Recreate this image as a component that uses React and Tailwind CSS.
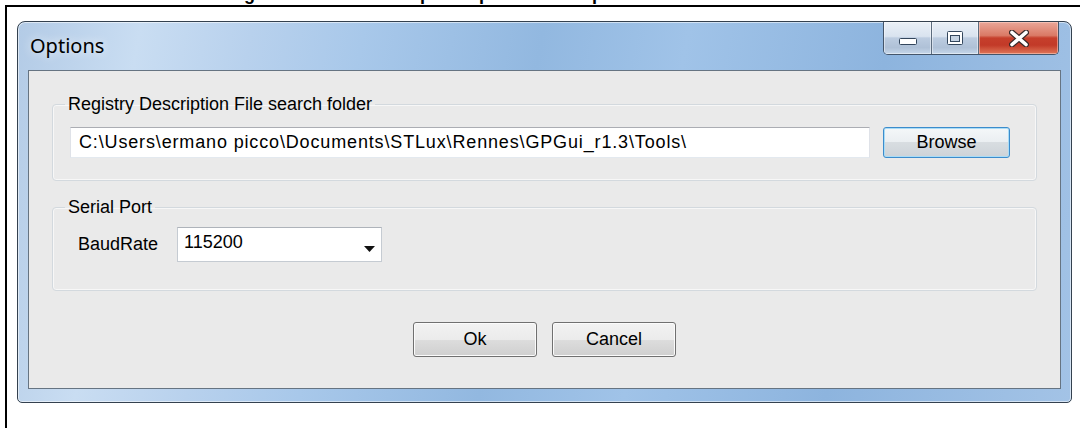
import React from 'react'

const ui = "[font-family:'Liberation_Sans',Arial,sans-serif] text-[18px] text-black"

function CaptionButtons() {
  return (
    <div className="flex h-[33px] overflow-hidden rounded-b-[5px] border border-t-0 border-[#44556a] shadow-[inset_0_-1px_0_rgba(255,255,255,0.5)]">
      <div className="flex w-[48px] items-end justify-center pb-[9px] bg-[linear-gradient(#eaf0f7_0%,#d9e3ef_45%,#bccce0_50%,#afc1d7_80%,#c6d7ea_100%)] border-r border-[#5c6c7e] shadow-[inset_0_0_0_1px_rgba(255,255,255,0.45)]">
        <svg width="18" height="7" viewBox="0 0 18 7">
          <rect x="0.5" y="0.5" width="17" height="6" rx="1" fill="#fff" stroke="#33465c" />
        </svg>
      </div>
      <div className="flex w-[47px] items-center justify-center bg-[linear-gradient(#eaf0f7_0%,#d9e3ef_45%,#bccce0_50%,#afc1d7_80%,#c6d7ea_100%)] border-r border-[#5c6c7e] shadow-[inset_0_0_0_1px_rgba(255,255,255,0.45)]">
        <svg width="16" height="14" viewBox="0 0 16 14">
          <rect x="0.5" y="0.5" width="15" height="13" rx="1" fill="#fff" stroke="#33465c" />
          <rect x="3.5" y="4.5" width="9" height="6" fill="#c5d3e3" stroke="#33465c" />
        </svg>
      </div>
      <div className="flex w-[79px] items-center justify-center bg-[linear-gradient(#eaa698_0%,#da7a66_42%,#c63f2c_50%,#c23a28_72%,#df7658_100%)] shadow-[inset_0_0_0_1px_rgba(255,220,210,0.5)]">
        <svg width="20" height="17" viewBox="0 0 20 17">
          <path d="M3 2.5 L17 14.5 M17 2.5 L3 14.5" stroke="#3b2a2a" strokeWidth="6" strokeLinecap="round" />
          <path d="M3 2.5 L17 14.5 M17 2.5 L3 14.5" stroke="#fff" strokeWidth="3.6" strokeLinecap="round" />
        </svg>
      </div>
    </div>
  )
}

function WinButton({ children, focused }) {
  return (
    <button
      className={
        focused
          ? `h-[31px] w-[127px] shrink-0 rounded-[3px] border border-[#3c8ccc] bg-[linear-gradient(#f4f7f9_0%,#eaeef1_50%,#d8dde1_50%,#cdd3d8_100%)] shadow-[inset_0_0_0_1px_#a9dcf6] ${ui}`
          : `h-[35px] w-[124px] rounded-[3px] border border-[#707070] bg-[linear-gradient(#f2f2f2_0%,#ebebeb_50%,#dddddd_50%,#cfcfcf_100%)] shadow-[inset_0_0_0_1px_#fbfbfb] ${ui}`
      }
    >
      {children}
    </button>
  )
}

function GroupBox({ title, className, children }) {
  return (
    <fieldset className={`rounded-[4px] border border-[#d3d9de] shadow-[inset_0_0_0_1px_#f7f7f7] ${className}`}>
      <legend className={`ml-[12px] px-[3px] leading-[18px] ${ui}`}>{title}</legend>
      {children}
    </fieldset>
  )
}

function OptionsDialog() {
  return (
    <div className="flex h-[382px] w-[1055px] flex-col rounded-t-[8px] rounded-b-[5px] border border-[#34414f] bg-[linear-gradient(100deg,#b3cbe6_0%,#c9ddf2_11%,#b8d1ed_21%,#a8c8ea_31%,#92b8e0_47%,#a0c3e8_60%,#8db4de_78%,#a3c3e6_100%)] shadow-[inset_0_0_0_1px_rgba(255,255,255,0.55)]">
      {/* title bar */}
      <div className="flex h-[48px] shrink-0">
        <span className="pl-[12px] pt-[11px] text-[20px] leading-[26px] text-black [font-family:'Noto_Sans',sans-serif] [text-shadow:0_0_10px_rgba(255,255,255,0.95)]">
          Options
        </span>
        <div className="ml-auto mr-[12px]">
          <CaptionButtons />
        </div>
      </div>

      {/* client area */}
      <div className="mx-[10px] mb-[13px] flex flex-1 flex-col border border-[#667482] bg-[#eaeaea] px-[23px] pt-[24px]">
        <GroupBox title="Registry Description File search folder">
          <div className="flex items-center gap-[13px] pl-[17px] pr-[24px] pt-[14px] pb-[22px]">
            <div className={`flex h-[31px] w-[800px] items-center border border-[#abadb3] border-l-[#dfe2e8] border-r-[#dfe2e8] border-b-[#e3e9ef] bg-white pl-[8px] whitespace-nowrap tracking-[0.85px] ${ui}`}>
              C:\Users\ermano picco\Documents\STLux\Rennes\GPGui_r1.3\Tools\
            </div>
            <WinButton focused>Browse</WinButton>
          </div>
        </GroupBox>

        <GroupBox title="Serial Port" className="mt-[17px]">
          <div className="flex items-center gap-[19px] pl-[25px] pt-[11px] pb-[28px]">
            <span className={ui}>BaudRate</span>
            <div className="flex h-[35px] w-[205px] items-start justify-between border border-[#c5cbd2] border-t-[#aeb3ba] bg-white pl-[6px] pr-[6px] pt-[4px]">
              <span className={`leading-[20px] ${ui}`}>115200</span>
              <svg className="mt-[14px]" width="11" height="6" viewBox="0 0 11 6">
                <path d="M0 0 H11 L5.5 6 Z" fill="#111" />
              </svg>
            </div>
          </div>
        </GroupBox>

        <div className="mt-[31px] flex justify-center gap-[15px]">
          <WinButton>Ok</WinButton>
          <WinButton>Cancel</WinButton>
        </div>
      </div>
    </div>
  )
}

export default function App() {
  return (
    <div className="h-[428px] w-[1080px] overflow-hidden bg-white">
      {/* figure caption, clipped so only the descenders remain */}
      <div className="h-[5px] overflow-hidden">
        <p className="-mt-[15px] pl-[228px] whitespace-nowrap text-[18px] leading-[18px] font-bold text-black [font-family:'Liberation_Sans',Arial,sans-serif]">
          Figure 8. The GPGui Options panel for the port and the RDF folder
        </p>
      </div>
      <div className="ml-[5px] h-[423px] w-[1100px] border-l-2 border-t-2 border-black pl-[10px] pt-[14px]">
        <OptionsDialog />
      </div>
    </div>
  )
}
